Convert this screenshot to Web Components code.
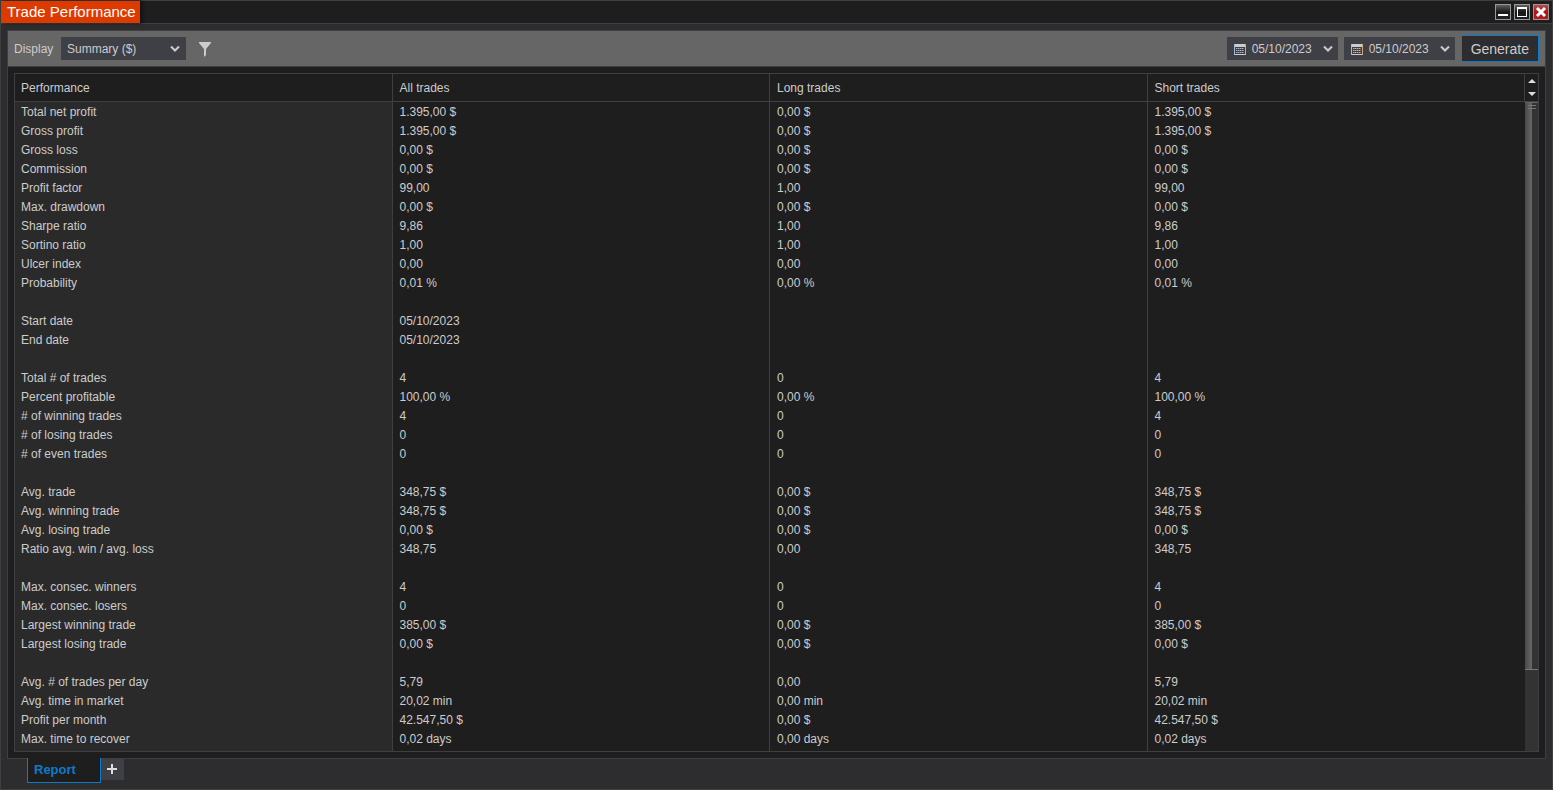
<!DOCTYPE html>
<html lang="en">
<head>
<meta charset="utf-8">
<title>Trade Performance</title>
<style>
  html, body {
    height: 100%;
    margin: 0;
  }
  body {
    --line: #3f3f42;
    --dark: #1e1e1e;
    --control: #3f3f46;
    --accent: #0e7ac9;
    background: #2d2d30;
    color: #ccc;
    font: 12px/19px "Liberation Sans", Arial, sans-serif;
  }
</style>
</head>
<body>
<trade-window>
  <span slot="title">Trade Performance</span>
  <report-toolbar slot="toolbar"></report-toolbar>
  <performance-table></performance-table>
  <report-tabs slot="tabs"></report-tabs>
</trade-window>

<script>
/**
 * trade-window, the window frame: title bar, framed panel and tab strip
 */
class TradeWindow extends HTMLElement {
  constructor() {
    super();
    this.attachShadow({ mode: "open" });
  }

  connectedCallback() {
    this.shadowRoot.innerHTML = `
      <style>
        :host {
          display: flex;
          flex-direction: column;
          box-sizing: border-box;
          height: 100vh;
          border: 1px solid var(--line);
        }
        header {
          display: flex;
          align-items: center;
          gap: 3px;
          height: 22px;
          padding-right: 3px;
          background: var(--dark);
          border-bottom: 1px solid var(--line);
        }
        h1 {
          margin: 0 auto 0 0;
          padding: 0 4px 0 6px;
          background: #dd3a00;
          color: #fff;
          font-size: 15px;
          font-weight: normal;
          line-height: 22px;
          box-shadow: 2px 0 3px #111;
        }
        button {
          display: block;
          box-sizing: border-box;
          width: 16px;
          height: 16px;
          padding: 0;
          border: 1px solid #999;
          background: linear-gradient(#606060, #181818 50%, #222);
          color: #fff;
        }
        button.close {
          background: linear-gradient(#b54d50, #ac1518 50%, #b81b1e);
        }
        svg {
          display: block;
        }
        .panel {
          flex: 1;
          display: flex;
          flex-direction: column;
          min-height: 0;
          margin: 6px 6px 0;
          border: 1px solid var(--line);
          background: var(--dark);
        }
        main {
          flex: 1;
          display: flex;
          min-height: 0;
          padding: 6px;
        }
      </style>
      <header>
        <h1><slot name="title"></slot></h1>
        <button type="button" aria-label="Minimize">
          <svg width="14" height="14"><path d="M2 9h10v2H2z" fill="currentColor"/></svg>
        </button>
        <button type="button" aria-label="Maximize">
          <svg width="14" height="14"><path fill-rule="evenodd" d="M2 2h10v10H2zM3 4v7h8V4z" fill="currentColor"/></svg>
        </button>
        <button type="button" class="close" aria-label="Close">
          <svg width="14" height="14"><path d="M3 3l8 8M11 3l-8 8" stroke="currentColor" stroke-width="3"/></svg>
        </button>
      </header>
      <div class="panel">
        <slot name="toolbar"></slot>
        <main><slot></slot></main>
      </div>
      <slot name="tabs"></slot>
    `;
  }
}
customElements.define("trade-window", TradeWindow);

/**
 * date-field, a date box with a calendar icon and a drop-down arrow
 */
class DateField extends HTMLElement {
  constructor() {
    super();
    this.attachShadow({ mode: "open" });
  }

  connectedCallback() {
    const label = this.getAttribute("label");
    const tint = this.getAttribute("tint");
    this.shadowRoot.innerHTML = `
      <style>
        :host {
          display: flex;
          align-items: center;
          box-sizing: border-box;
          width: 111px;
          height: 23px;
          padding: 1px 5px 0 7px;
          background: var(--control);
        }
        input {
          flex: 1;
          min-width: 0;
          padding: 0 0 0 6px;
          border: 0;
          outline: 0;
          background: none;
          color: inherit;
          font: inherit;
        }
        button {
          padding: 0;
          border: 0;
          background: none;
          color: inherit;
        }
        svg {
          display: block;
        }
      </style>
      <svg width="12" height="11">
        <path d="M0 0h12v3H0zM0 10h12v1H0z" fill="#ccc"/>
        <path d="M0 0h1v11H0z" fill="#a3bdd6"/>
        <path d="M11 0h1v11h-1z" fill="#cfa877"/>
        <path d="M2 4h8M2 6h8M2 8h8" transform="translate(0 .5)" stroke="${tint}" stroke-dasharray="1.500 .5"/>
      </svg>
      <input type="text" aria-label="${label}" value="${this.getAttribute("value")}">
      <button type="button" aria-label="Open calendar">
        <svg width="10" height="8"><path d="M1 1.500l4 4 4-4" fill="none" stroke="currentColor" stroke-width="2"/></svg>
      </button>
    `;
  }
}
customElements.define("date-field", DateField);

/**
 * report-toolbar, display mode, filter and date range
 */
class ReportToolbar extends HTMLElement {
  constructor() {
    super();
    this.attachShadow({ mode: "open" });
  }

  connectedCallback() {
    this.shadowRoot.innerHTML = `
      <style>
        :host {
          display: flex;
          align-items: center;
          gap: 6px;
          height: 35px;
          padding: 0 6px;
          background: #666;
          border-bottom: 1px solid var(--line);
        }
        label {
          min-width: 41px;
          padding-top: 1px;
        }
        .select {
          position: relative;
        }
        select {
          display: block;
          appearance: none;
          width: 125px;
          height: 23px;
          padding: 1px 20px 0 6px;
          border: 0;
          border-radius: 0;
          background: var(--control);
          color: inherit;
          font: inherit;
        }
        .select svg {
          position: absolute;
          right: 6px;
          top: 8px;
          pointer-events: none;
        }
        .filter {
          margin: 0 auto 0 6px;
          padding: 0;
          border: 0;
          background: none;
          color: inherit;
        }
        svg {
          display: block;
        }
        .generate {
          box-sizing: border-box;
          height: 27px;
          padding: 1px 9px 0;
          border: 1px solid var(--accent);
          background: #2d2d30;
          color: inherit;
          font: inherit;
          font-size: 14px;
        }
      </style>
      <label for="display">Display</label>
      <div class="select">
        <select id="display">
          <option>Summary ($)</option>
        </select>
        <svg width="10" height="8"><path d="M1 1.500l4 4 4-4" fill="none" stroke="currentColor" stroke-width="2"/></svg>
      </div>
      <button type="button" class="filter" aria-label="Filter">
        <svg width="14" height="16"><path d="M1 1h12v1L8 8v6l-2 2V8L1 2z" fill="currentColor"/></svg>
      </button>
      <date-field label="Start date" value="05/10/2023" tint="#a9b5c6"></date-field>
      <date-field label="End date" value="05/10/2023" tint="#c6b29d"></date-field>
      <button type="button" class="generate">Generate</button>
    `;
  }
}
customElements.define("report-toolbar", ReportToolbar);

// label, all trades, long trades, short trades. An empty row parts the groups.
const ROWS = [
  ["Total net profit", "1.395,00 $", "0,00 $", "1.395,00 $"],
  ["Gross profit", "1.395,00 $", "0,00 $", "1.395,00 $"],
  ["Gross loss", "0,00 $", "0,00 $", "0,00 $"],
  ["Commission", "0,00 $", "0,00 $", "0,00 $"],
  ["Profit factor", "99,00", "1,00", "99,00"],
  ["Max. drawdown", "0,00 $", "0,00 $", "0,00 $"],
  ["Sharpe ratio", "9,86", "1,00", "9,86"],
  ["Sortino ratio", "1,00", "1,00", "1,00"],
  ["Ulcer index", "0,00", "0,00", "0,00"],
  ["Probability", "0,01 %", "0,00 %", "0,01 %"],
  [],
  ["Start date", "05/10/2023"],
  ["End date", "05/10/2023"],
  [],
  ["Total # of trades", "4", "0", "4"],
  ["Percent profitable", "100,00 %", "0,00 %", "100,00 %"],
  ["# of winning trades", "4", "0", "4"],
  ["# of losing trades", "0", "0", "0"],
  ["# of even trades", "0", "0", "0"],
  [],
  ["Avg. trade", "348,75 $", "0,00 $", "348,75 $"],
  ["Avg. winning trade", "348,75 $", "0,00 $", "348,75 $"],
  ["Avg. losing trade", "0,00 $", "0,00 $", "0,00 $"],
  ["Ratio avg. win / avg. loss", "348,75", "0,00", "348,75"],
  [],
  ["Max. consec. winners", "4", "0", "4"],
  ["Max. consec. losers", "0", "0", "0"],
  ["Largest winning trade", "385,00 $", "0,00 $", "385,00 $"],
  ["Largest losing trade", "0,00 $", "0,00 $", "0,00 $"],
  [],
  ["Avg. # of trades per day", "5,79", "0,00", "5,79"],
  ["Avg. time in market", "20,02 min", "0,00 min", "20,02 min"],
  ["Profit per month", "42.547,50 $", "0,00 $", "42.547,50 $"],
  ["Max. time to recover", "0,02 days", "0,00 days", "0,02 days"],
];

/**
 * performance-table, the report figures with a scroll bar at the right
 */
class PerformanceTable extends HTMLElement {
  constructor() {
    super();
    this.attachShadow({ mode: "open" });
  }

  connectedCallback() {
    const columns = ["Performance", "All trades", "Long trades", "Short trades"];
    const head = columns.map((name) => `<th scope="col">${name}</th>`).join("");
    const body = ROWS.map((row) => {
      const cells = [1, 2, 3].map((i) => `<td>${row[i] || ""}</td>`).join("");
      return `<tr><th scope="row">${row[0] || ""}</th>${cells}</tr>`;
    }).join("");

    this.shadowRoot.innerHTML = `
      <style>
        :host {
          flex: 1;
          display: flex;
          min-height: 0;
          border: 1px solid var(--line);
        }
        .view {
          flex: 1;
          overflow: hidden;
        }
        table {
          width: 100%;
          height: 100%;
          table-layout: fixed;
          border-spacing: 0;
        }
        th, td {
          box-sizing: border-box;
          height: 19px;
          padding: 2px 6px 0 7px;
          border-right: 1px solid var(--line);
          font-weight: normal;
          line-height: 17px;
          text-align: left;
          white-space: nowrap;
        }
        th:first-child {
          padding-left: 6px;
        }
        thead th {
          height: 28px;
          border-bottom: 1px solid var(--line);
        }
        tbody th {
          background: #2a2a2a;
        }
        td:last-child {
          border-right-color: transparent;
        }
        /* takes the height that the rows leave over */
        .rest th, .rest td {
          height: auto;
          padding: 0;
        }
        .scroll {
          display: flex;
          flex-direction: column;
          width: 13px;
        }
        .arrows {
          display: flex;
          flex-direction: column;
          height: 27px;
          border-bottom: 1px solid var(--line);
        }
        button {
          flex: 1;
          display: grid;
          place-items: center;
          padding: 0;
          border: 0;
          background: none;
          color: #ddd;
        }
        .track {
          flex: 1;
          background: #333;
        }
        .thumb {
          box-sizing: border-box;
          height: 87.5%;
          padding-top: 2px;
          border-top: 1px solid #666;
          border-bottom: 1px solid #777;
          background: linear-gradient(90deg, #484848, #686868 7px, #333 7px);
        }
        .thumb svg {
          display: block;
          margin-left: 3px;
        }
      </style>
      <div class="view">
        <table>
          <thead><tr>${head}</tr></thead>
          <tbody>
            ${body}
            <tr class="rest"><th></th><td></td><td></td><td></td></tr>
          </tbody>
        </table>
      </div>
      <div class="scroll">
        <div class="arrows">
          <button type="button" aria-label="Scroll up">
            <svg width="8" height="4"><path d="M0 4l4-4 4 4z" fill="currentColor"/></svg>
          </button>
          <button type="button" aria-label="Scroll down">
            <svg width="8" height="4"><path d="M0 0l4 4 4-4z" fill="currentColor"/></svg>
          </button>
        </div>
        <div class="track">
          <div class="thumb">
            <svg width="8" height="5"><path d="M0 .5h8M0 3.500h8" stroke="#777"/></svg>
          </div>
        </div>
      </div>
    `;
  }
}
customElements.define("performance-table", PerformanceTable);

/**
 * report-tabs, the tab strip under the panel
 */
class ReportTabs extends HTMLElement {
  constructor() {
    super();
    this.attachShadow({ mode: "open" });
  }

  connectedCallback() {
    this.shadowRoot.innerHTML = `
      <style>
        :host {
          display: flex;
          align-items: flex-start;
          height: 31px;
          margin-top: -1px;
          padding-left: 26px;
          z-index: 1;
        }
        button {
          box-sizing: border-box;
          border: 0;
          font: inherit;
        }
        .tab {
          width: 74px;
          height: 25px;
          padding: 0 6px 2px;
          border: solid var(--accent);
          border-width: 0 1px 1px;
          background: var(--dark);
          color: var(--accent);
          font-size: 13px;
          font-weight: bold;
          text-align: left;
        }
        .add {
          display: grid;
          place-items: center;
          width: 23px;
          height: 21px;
          margin-top: 1px;
          padding: 0 1px 1px 0;
          background: var(--control);
          color: #ddd;
        }
      </style>
      <button type="button" class="tab">Report</button>
      <button type="button" class="add" aria-label="Add tab">
        <svg width="10" height="10"><path d="M0 4h4V0h2v4h4v2H6v4H4V6H0z" fill="currentColor"/></svg>
      </button>
    `;
  }
}
customElements.define("report-tabs", ReportTabs);
</script>
</body>
</html>
